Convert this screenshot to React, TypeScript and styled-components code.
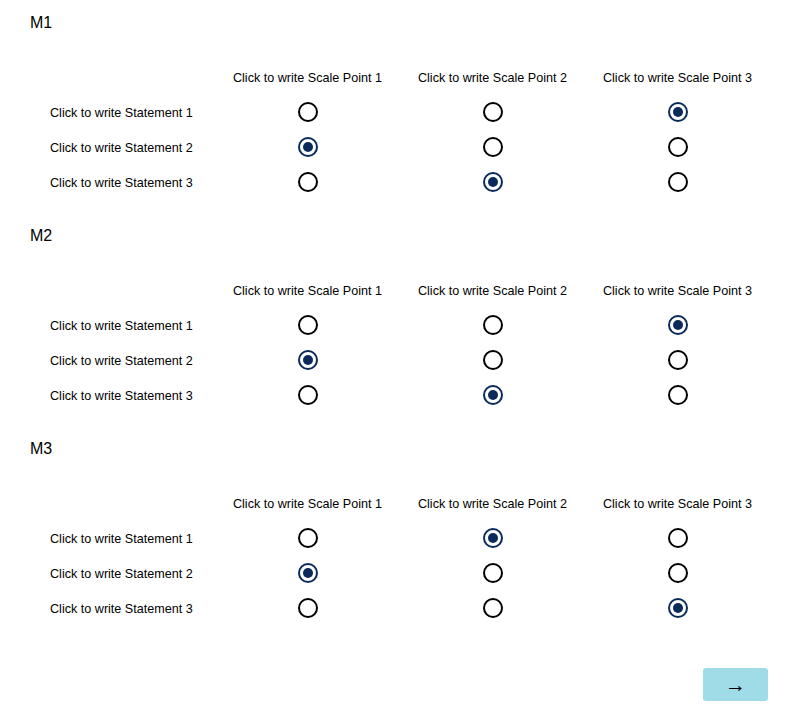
import React from "react";
import styled, { createGlobalStyle } from "styled-components";

const Global = createGlobalStyle`
  html, body { margin: 0; padding: 0; background: #fff; }
  body { font-family: "Liberation Sans", Arial, sans-serif; color: #000; }
`;

const Page = styled.div`
  width: 796px;
  box-sizing: border-box;
  padding: 12px 28px 0 30px;
  display: flex;
  flex-direction: column;
`;

const Section = styled.section`
  display: flex;
  flex-direction: column;
  gap: 25.5px;
  & + & { margin-top: 25.5px; }
`;

const Title = styled.h2`
  margin: 0;
  font-size: 16px;
  line-height: 22px;
  font-weight: normal;
`;

const Matrix = styled.div`
  display: grid;
  grid-template-columns: repeat(4, 185px);
  grid-auto-rows: 35px;
  align-items: center;
`;

const Header = styled.div`
  font-size: 12.6px;
  text-align: center;
  white-space: nowrap;
  padding-top: 1px;
`;

const Label = styled.div`
  font-size: 12.6px;
  padding-left: 20px;
  padding-top: 1px;
  white-space: nowrap;
`;

const Cell = styled.div`
  display: flex;
  justify-content: center;
  align-items: center;
`;

const Radio = styled.span<{ $checked: boolean }>`
  width: 20px;
  height: 20px;
  box-sizing: border-box;
  border-radius: 50%;
  border: 2px solid ${(p) => (p.$checked ? "#0b2a5c" : "#000")};
  display: flex;
  align-items: center;
  justify-content: center;
  &::after {
    content: "";
    display: ${(p) => (p.$checked ? "block" : "none")};
    width: 10px;
    height: 10px;
    border-radius: 50%;
    background: #0b2a5c;
  }
`;

const Footer = styled.div`
  display: flex;
  justify-content: flex-end;
  margin-top: 42.5px;
`;

const NextButton = styled.button`
  width: 65px;
  height: 33px;
  border: none;
  border-radius: 3px;
  background: #a0dce8;
  color: #000;
  font-family: "Liberation Sans", Arial, sans-serif;
  font-size: 21px;
  line-height: 33px;
  padding: 0;
  cursor: pointer;
`;

const scale = ["Click to write Scale Point 1", "Click to write Scale Point 2", "Click to write Scale Point 3"];
const statements = ["Click to write Statement 1", "Click to write Statement 2", "Click to write Statement 3"];

const sections: { title: string; answers: number[] }[] = [
  { title: "M1", answers: [2, 0, 1] },
  { title: "M2", answers: [2, 0, 1] },
  { title: "M3", answers: [1, 0, 2] },
];

export default function App() {
  return (
    <>
      <Global />
      <Page>
        {sections.map((s) => (
          <Section key={s.title}>
            <Title>{s.title}</Title>
            <Matrix>
              <div />
              {scale.map((h) => (
                <Header key={h}>{h}</Header>
              ))}
              {statements.map((st, r) => (
                <React.Fragment key={st}>
                  <Label>{st}</Label>
                  {scale.map((h, c) => (
                    <Cell key={h}>
                      <Radio $checked={s.answers[r] === c} />
                    </Cell>
                  ))}
                </React.Fragment>
              ))}
            </Matrix>
          </Section>
        ))}
        <Footer>
          <NextButton>→</NextButton>
        </Footer>
      </Page>
    </>
  );
}
